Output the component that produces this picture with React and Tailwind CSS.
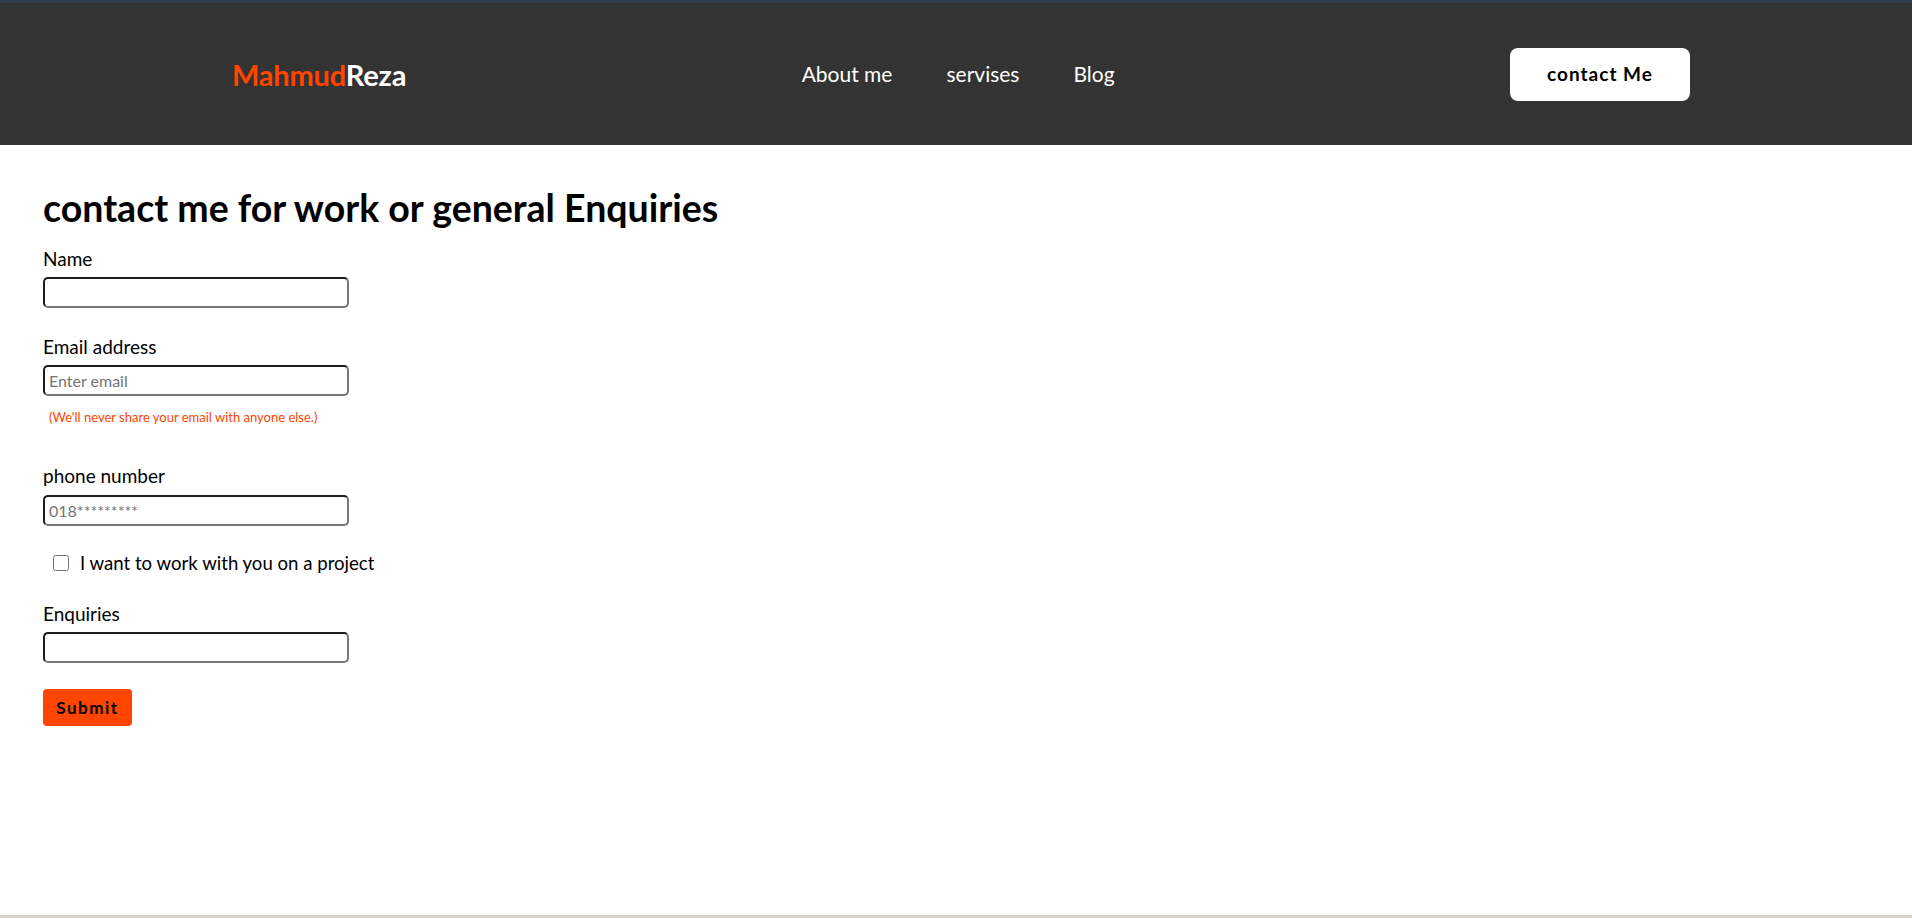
import { useState } from 'react';

const font = { fontFamily: 'Lato, "Open Sans", sans-serif' };

function Header() {
  return (
    <header className="bg-[#333333] border-t-[3px] border-[#323c50]">
      <nav className="h-[142px] pl-[232px] pr-[222px] flex items-center justify-between">
        <a href="#" className="text-[29px] font-bold tracking-[-0.2px] leading-none">
          <span className="text-[#ff4500]">Mahmud</span>
          <span className="text-white">Reza</span>
        </a>
        <ul className="flex items-center gap-[54px] text-[21px] text-white">
          <li><a href="#">About me</a></li>
          <li><a href="#">servises</a></li>
          <li><a href="#">Blog</a></li>
        </ul>
        <button className="w-[180px] h-[53px] bg-white rounded-[8px] text-[19px] font-bold tracking-[1px] text-black">
          contact Me
        </button>
      </nav>
    </header>
  );
}

const inputClass =
  'w-[306px] h-[31px] border-2 border-[#1e1e1e] border-r-[#777777] border-b-[#777777] rounded-[5px] px-[4px] text-[16px] text-black placeholder:text-[#757575] outline-none';

function ContactForm() {
  const [form, setForm] = useState({ name: '', email: '', phone: '', project: false, enquiries: '' });

  const handleChange = (e) => {
    const { name, value, type, checked } = e.target;
    setForm((prev) => ({ ...prev, [name]: type === 'checkbox' ? checked : value }));
  };

  return (
    <main className="pl-[43px] text-black">
      <h1 className="mt-[39px] text-[37.5px] leading-[48px] font-bold">contact me for work or general Enquiries</h1>
      <form onSubmit={(e) => e.preventDefault()} className="flex flex-col items-start">
        <label className="mt-[15px] text-[19px] leading-[24px]">Name</label>
        <input name="name" value={form.name} onChange={handleChange} className={`mt-[6px] ${inputClass}`} />

        <label className="mt-[27px] text-[19px] leading-[24px]">Email address</label>
        <input
          type="email"
          name="email"
          value={form.email}
          onChange={handleChange}
          placeholder="Enter email"
          className={`mt-[6px] ${inputClass}`}
        />
        <small className="mt-[13px] ml-[6px] text-[13px] leading-[16px] text-[#ff4500]">
          (We'll never share your email with anyone else.)
        </small>

        <label className="mt-[39px] text-[19px] leading-[24px]">phone number</label>
        <input
          type="tel"
          name="phone"
          value={form.phone}
          onChange={handleChange}
          placeholder="018*********"
          className={`mt-[7px] ${inputClass}`}
        />

        <label className="mt-[25px] ml-[10px] flex items-center gap-[11px] text-[18.6px] leading-[24px]">
          <input
            type="checkbox"
            name="project"
            checked={form.project}
            onChange={handleChange}
            className="w-[16px] h-[16px] m-0"
          />
          I want to work with you on a project
        </label>

        <label className="mt-[27px] text-[19px] leading-[24px]">Enquiries</label>
        <input name="enquiries" value={form.enquiries} onChange={handleChange} className={`mt-[6px] ${inputClass}`} />

        <button
          type="submit"
          className="mt-[26px] w-[89px] h-[37px] bg-[#ff4500] rounded-[4px] text-[17px] font-bold tracking-[1.5px] text-black"
        >
          Submit
        </button>
      </form>
    </main>
  );
}

export default function App() {
  return (
    <div style={font} className="min-h-screen bg-white flex flex-col">
      <Header />
      <ContactForm />
      <div className="flex-1" />
      <div className="h-[3px] bg-[#dcd0cc]" />
    </div>
  );
}
